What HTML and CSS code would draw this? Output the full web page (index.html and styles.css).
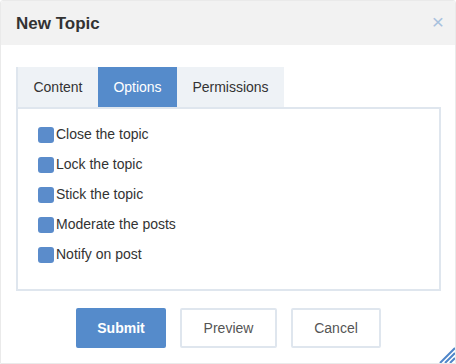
FILE: index.html
```html
<!DOCTYPE html>
<html>
<head>
    <title>New Topic</title>
    <meta name="viewport" content="width=device-width" />
    <link rel="stylesheet" href="styles.css">
</head>
<body>

<div class="dialog">
    <div class="dialog-head">
        <h3>New Topic</h3>
        <span class="close">&times;</span>
    </div>

    <div class="dialog-body">
        <ul class="tabs">
            <li>Content</li>
            <li class="active">Options</li>
            <li>Permissions</li>
        </ul>
        <div class="panel">
            <label class="check"><span class="box"></span>Close the topic</label>
            <label class="check"><span class="box"></span>Lock the topic</label>
            <label class="check"><span class="box"></span>Stick the topic</label>
            <label class="check"><span class="box"></span>Moderate the posts</label>
            <label class="check"><span class="box"></span>Notify on post</label>
        </div>
    </div>

    <div class="dialog-foot">
        <button class="btn primary">Submit</button>
        <button class="btn wide">Preview</button>
        <button class="btn">Cancel</button>
    </div>

    <svg class="resize" width="20" height="20" viewBox="0 0 20 20">
        <path d="M20 5 L5 20 M20 10 L10 20 M20 15 L15 20" stroke="#4f86c9" stroke-width="2"/>
    </svg>
</div>

</body>
</html>
```

FILE: styles.css
```css
body, html {
    margin: 0;
    font-family: "Liberation Sans", Arial, sans-serif;
    background: #fff;
}

.dialog {
    position: relative;
    width: 456px;
    height: 364px;
    box-sizing: border-box;
    border: 1px solid #eaeaea;
    border-radius: 3px 3px 0 0;
    background: #fff;
    overflow: hidden;
}

.dialog-head {
    display: flex;
    align-items: center;
    justify-content: space-between;
    height: 44px;
    padding: 0 11px 0 15px;
    background: #f2f2f2;
}

.dialog-head h3 {
    margin: 0;
    font-size: 17px;
    font-weight: bold;
    color: #333;
    padding-top: 1px;
}

.close {
    color: #a8c1de;
    font-size: 21px;
    line-height: 1;
    margin-top: -3px;
}

.dialog-body {
    padding: 22px 14px 0 15px;
}

.tabs {
    display: flex;
    margin: 0;
    padding: 0;
    list-style: none;
}

.tabs li {
    width: 80px;
    height: 40px;
    line-height: 40px;
    text-align: center;
    font-size: 14px;
    color: #333;
    background: #eef2f6;
    border-left: 2px solid #dfe6ee;
}

.tabs li + li {
    border-left: 0;
}

.tabs li.active {
    width: 79px;
    background: #558bcb;
    color: #fff;
}

.tabs li:last-child {
    width: 107px;
}

.panel {
    display: flex;
    flex-direction: column;
    height: 184px;
    box-sizing: border-box;
    padding: 10px 20px 0;
    border: 2px solid #dfe6ee;
}

.check {
    display: flex;
    align-items: center;
    height: 30px;
    font-size: 14px;
    color: #333;
}

.box {
    width: 16px;
    height: 16px;
    border-radius: 3px;
    background: #5b8ccb;
    margin-right: 2px;
    margin-top: 2px;
}

.dialog-foot {
    display: flex;
    gap: 14px;
    padding: 17px 0 0 75px;
}

.btn {
    width: 90px;
    height: 40px;
    padding: 0;
    font-family: inherit;
    font-size: 14px;
    color: #555;
    background: #fff;
    border: 2px solid #dfe6ee;
    border-radius: 2px;
}

.btn.wide {
    width: 97px;
}

.btn.primary {
    background: #558bcb;
    border-color: #558bcb;
    color: #fff;
    font-weight: bold;
}

.resize {
    position: absolute;
    right: 0;
    bottom: 0;
}
```
